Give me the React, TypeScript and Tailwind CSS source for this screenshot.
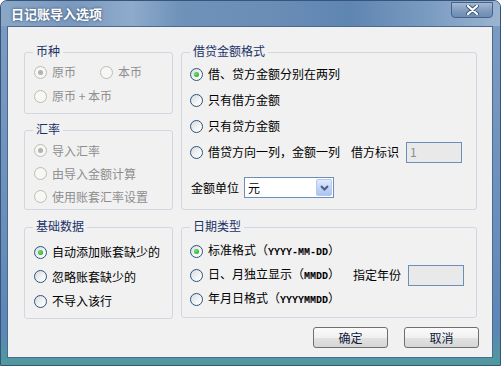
import clsx from 'clsx'
import type { ReactNode } from 'react'

const cjk = "font-['Noto_Sans_CJK_SC','Noto_Sans',sans-serif]"

function Radio({ checked, disabled }: { checked?: boolean; disabled?: boolean }) {
  return (
    <span
      className={clsx(
        'flex h-[13px] w-[13px] shrink-0 items-center justify-center rounded-full border',
        disabled
          ? 'border-[#bcbcb4] bg-[#f7f7f5]'
          : 'border-[#2f5378] bg-[linear-gradient(135deg,#d5dbe2_0%,#f4f5f6_60%,#ffffff_100%)]'
      )}
    >
      {checked && (
        <span
          className={clsx(
            'h-[5px] w-[5px] rounded-full',
            disabled ? 'bg-[#b3b3ac]' : 'bg-[radial-gradient(circle_at_40%_40%,#6fe46f,#159a15)]'
          )}
        />
      )}
    </span>
  )
}

function Option({
  label,
  checked,
  disabled,
  className,
}: {
  label: ReactNode
  checked?: boolean
  disabled?: boolean
  className?: string
}) {
  return (
    <div className={clsx('flex items-center gap-[5px]', className)}>
      <Radio checked={checked} disabled={disabled} />
      <span className={clsx('whitespace-nowrap', disabled ? 'text-[#8e8e8e]' : 'text-black')}>{label}</span>
    </div>
  )
}

function Group({ title, className, children }: { title: string; className?: string; children: ReactNode }) {
  return (
    <div className={clsx('relative rounded-[3px] border border-[#d0d7e1]', className)}>
      <span className="absolute -top-[10px] left-[8px] bg-[#f1f1f1] px-[3px] leading-[16px] text-[#1b3167]">
        {title}
      </span>
      {children}
    </div>
  )
}

function TextBox({ value }: { value?: string }) {
  return (
    <div className="flex h-[21px] w-[56px] items-center border border-[#6a8fb8] bg-[#e9e9e9] pl-[3px] text-[#8c8c8c]">
      {value}
    </div>
  )
}

function Mono({ children }: { children: string }) {
  return <span className="font-['Liberation_Mono',monospace] text-[10px] font-bold">{children}</span>
}

function Button({ label }: { label: string }) {
  return (
    <button
      type="button"
      className="flex h-[21px] w-[75px] items-center justify-center rounded-[3px] border border-[#6f6f6f] bg-[linear-gradient(180deg,#fbfbfb_0%,#f0f0f0_50%,#e2e2e2_51%,#d6d6d6_100%)] text-[#10203a]"
    >
      {label}
    </button>
  )
}

export default function App() {
  return (
    <div className={clsx('h-[366px] w-[501px] text-[12px] leading-[16px]', cjk)}>
      <div className="flex h-full flex-col rounded-t-[7px] border border-[#37557a] bg-[linear-gradient(180deg,#7d9dc2_0%,#6a8fbc_60%,#5c86b6_90%,#4f9a9c_100%)]">
        {/* title bar */}
        <div className="flex h-[25px] shrink-0 justify-between rounded-t-[6px] bg-[linear-gradient(90deg,#8ba7c7_0%,#7a99be_14%,#8eabcb_26%,#6f92ba_36%,#6a8db6_55%,#5f85b2_70%,#7b9cc1_86%,#9bb4d0_100%)] pr-[7px]">
          <span className="pl-[10px] pt-[4px] text-[13px] font-bold leading-[17px] text-white [text-shadow:0_0_3px_#2a4262]">
            日记账导入选项
          </span>
          <div className="mt-[1px] flex h-[16px] w-[42px] items-center justify-center rounded-b-[4px] border border-[#45638a] bg-[linear-gradient(180deg,#a5b9d1_0%,#7f9bbe_55%,#6d8cb3_100%)]">
            <svg width="13" height="10" viewBox="0 0 13 10">
              <path d="M2 1 L11 9 M11 1 L2 9" stroke="#3b5576" strokeWidth="4" strokeLinecap="round" />
              <path d="M2 1 L11 9 M11 1 L2 9" stroke="#ffffff" strokeWidth="2.2" strokeLinecap="round" />
            </svg>
          </div>
        </div>

        {/* client area */}
        <div className="mb-[7px] ml-[6px] mr-[7px] flex flex-1 flex-col border border-[#4a6a90] bg-[#f1f1f1] pl-[16px] pr-[13px] pt-[25px]">
          <div className="flex items-start gap-[8px]">
            {/* left column */}
            <div className="flex w-[149px] flex-col">
              <Group title="币种" className="h-[62px] pl-[9px] pt-[7px]">
                <div className="flex h-[24px] items-center gap-[24px]">
                  <Option label="原币" checked disabled />
                  <Option label="本币" disabled />
                </div>
                <Option label="原币 + 本币" disabled className="h-[24px]" />
              </Group>

              <Group title="汇率" className="mt-[16px] h-[80px] pl-[9px] pt-[8px]">
                <Option label="导入汇率" checked disabled className="h-[23px]" />
                <Option label="由导入金额计算" disabled className="h-[23px]" />
                <Option label="使用账套汇率设置" disabled className="h-[23px]" />
              </Group>

              <Group title="基础数据" className="mt-[17px] h-[92px] pl-[9px] pt-[12px]">
                <Option label="自动添加账套缺少的" checked className="h-[24.5px]" />
                <Option label="忽略账套缺少的" className="h-[24.5px]" />
                <Option label="不导入该行" className="h-[24.5px]" />
              </Group>
            </div>

            {/* right column */}
            <div className="flex w-[296px] flex-col">
              <Group title="借贷金额格式" className="h-[158px] pl-[8px] pr-[14px] pt-[8px]">
                <Option label="借、贷方金额分别在两列" checked className="h-[26px]" />
                <Option label="只有借方金额" className="h-[26px]" />
                <Option label="只有贷方金额" className="h-[26px]" />
                <div className="flex h-[26px] items-center">
                  <Option label="借贷方向一列，金额一列" />
                  <span className="ml-auto mr-[7px] text-black">借方标识</span>
                  <TextBox value="1" />
                </div>
                <div className="mt-[12px] flex items-center gap-[5px] pl-[1px]">
                  <span className="text-black">金额单位</span>
                  <div className="flex h-[21px] w-[90px] items-center justify-between border border-[#6a8fb8] bg-white pl-[3px] pr-[1px]">
                    <span className="text-black">元</span>
                    <span className="flex h-[17px] w-[16px] items-center justify-center rounded-[2px] border border-[#b4c7ec] bg-[linear-gradient(180deg,#e1ebfd_0%,#c3d5f8_50%,#adc4f1_100%)]">
                      <svg width="9" height="6" viewBox="0 0 9 6">
                        <path d="M1 1 L4.5 4.5 L8 1" fill="none" stroke="#4b5f86" strokeWidth="2" />
                      </svg>
                    </span>
                  </div>
                </div>
              </Group>

              <Group title="日期类型" className="mt-[17px] h-[91px] pl-[8px] pr-[12px] pt-[11px]">
                <Option
                  label={
                    <>
                      标准格式（<Mono>YYYY-MM-DD</Mono>）
                    </>
                  }
                  checked
                  className="h-[24px]"
                />
                <div className="flex h-[24px] items-center">
                  <Option
                    label={
                      <>
                        日、月独立显示（<Mono>MMDD</Mono>）
                      </>
                    }
                  />
                  <span className="ml-auto mr-[7px] text-black">指定年份</span>
                  <TextBox />
                </div>
                <Option
                  label={
                    <>
                      年月日格式（<Mono>YYYYMMDD</Mono>）
                    </>
                  }
                  className="h-[24px]"
                />
              </Group>
            </div>
          </div>

          <div className="mt-[8px] flex justify-end gap-[16px]">
            <Button label="确定" />
            <Button label="取消" />
          </div>
        </div>
      </div>
    </div>
  )
}
